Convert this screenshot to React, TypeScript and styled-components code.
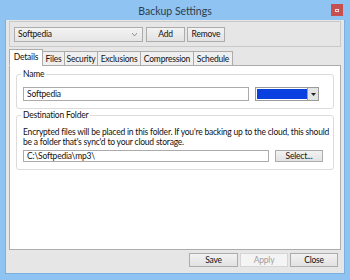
import React from 'react';
import styled, { createGlobalStyle } from 'styled-components';

const GlobalStyle = createGlobalStyle`
    html, body {
        margin: 0;
        padding: 0;
        background: #8fc3f1;
    }
    * {
        box-sizing: border-box;
    }
`;

const tabs = [
    { label: 'Details', width: 34 },
    { label: 'Files', width: 23 },
    { label: 'Security', width: 34 },
    { label: 'Exclusions', width: 44 },
    { label: 'Compression', width: 54 },
    { label: 'Schedule', width: 40 },
];

export default function App() {
    return (
        <>
            <GlobalStyle />
            <Window>
                <TitleBar>
                    <Title>Backup Settings</Title>
                    <CloseBox><CloseMark /></CloseBox>
                </TitleBar>
                <Client>
                    <ProfileBar>
                        <Combo>
                            <span>Softpedia</span>
                            <svg width="5" height="3" viewBox="0 0 5 3">
                                <path d="M0 0l2.5 3L5 0" fill="none" stroke="#888" strokeWidth="0.9" />
                            </svg>
                        </Combo>
                        <Button $width={39}>Add</Button>
                        <Button $width={38}>Remove</Button>
                    </ProfileBar>
                    <TabStrip>
                        {tabs.map((t, i) => (
                            <Tab key={t.label} $active={i === 0} $width={t.width}>{t.label}</Tab>
                        ))}
                    </TabStrip>
                    <TabPanel>
                        <Group>
                            <Legend>Name</Legend>
                            <Row>
                                <TextBox $width={226} $height={14}>Softpedia</TextBox>
                                <ColorPicker>
                                    <Swatch />
                                    <PickerButton>
                                        <svg width="5" height="3" viewBox="0 0 5 3">
                                            <path d="M0 0h5L2.5 3z" fill="#222" />
                                        </svg>
                                    </PickerButton>
                                </ColorPicker>
                            </Row>
                        </Group>
                        <Group>
                            <Legend>Destination Folder</Legend>
                            <Note>
                                Encrypted files will be placed in this folder. If you're backing up to the cloud, this should
                                <br />
                                be a folder that's sync'd to your cloud storage.
                            </Note>
                            <Row>
                                <TextBox $width={246} $height={12}>C:\Softpedia\mp3\</TextBox>
                                <Button $width={48} $height={12}>Select...</Button>
                            </Row>
                        </Group>
                    </TabPanel>
                    <Footer>
                        <Button $width={49} $height={14}>Save</Button>
                        <Button $width={48} $height={14} $disabled>Apply</Button>
                        <Button $width={48} $height={14}>Close</Button>
                    </Footer>
                </Client>
            </Window>
        </>
    );
}

const Window = styled.div`
    width: 350px;
    height: 280px;
    display: flex;
    flex-direction: column;
    background: #8fc3f1;
    padding: 0 5px 6px 5px;
    font-family: Lato, 'Noto Sans', sans-serif;
    font-size: 8.5px;
    letter-spacing: -0.2px;
    color: #111111;
`;

const TitleBar = styled.div`
    height: 20px;
    position: relative;
    display: flex;
    align-items: center;
    justify-content: center;
`;

const Title = styled.div`
    font-size: 10.5px;
    letter-spacing: 0;
    color: #2f3d4c;
    margin-top: 1px;
`;

const CloseBox = styled.div`
    position: absolute;
    right: 2px;
    top: 4px;
    width: 12px;
    height: 12px;
    background: #c74f50;
    display: flex;
    align-items: center;
    justify-content: center;
`;

const CloseMark = styled.div`
    width: 4px;
    height: 3px;
    border: 1px solid #f4dada;
`;

const Client = styled.div`
    flex: 1;
    display: flex;
    flex-direction: column;
    background: #e6e6e6;
    border: 1px solid #7ab0e0;
    border-top: none;
    padding: 1px 3px 0 3px;
`;

const ProfileBar = styled.div`
    height: 26px;
    display: flex;
    align-items: center;
    gap: 2px;
    padding: 0 4px;
    border: 1px solid #c9c9c9;
`;

const Combo = styled.div`
    width: 129px;
    height: 15px;
    display: flex;
    align-items: center;
    justify-content: space-between;
    padding: 0 5px 0 3px;
    background: linear-gradient(#f3f3f3, #e5e5e5);
    border: 1px solid #adadad;
    margin-right: 1px;
`;

const Button = styled.div<{ $width: number; $height?: number; $disabled?: boolean }>`
    width: ${p => p.$width}px;
    height: ${p => p.$height ?? 15}px;
    display: flex;
    align-items: center;
    justify-content: center;
    flex-shrink: 0;
    background: ${p => (p.$disabled ? '#f4f4f4' : 'linear-gradient(#f2f2f2, #e2e2e2)')};
    border: 1px solid ${p => (p.$disabled ? '#d5d5d5' : '#acacac')};
    color: ${p => (p.$disabled ? '#a0a0a0' : '#111111')};
`;

const TabStrip = styled.div`
    display: flex;
    align-items: flex-end;
    height: 18px;
    padding-left: 1px;
    position: relative;
    z-index: 1;
`;

const Tab = styled.div<{ $active?: boolean; $width: number }>`
    width: ${p => p.$width}px;
    height: ${p => (p.$active ? 17 : 15)}px;
    display: flex;
    align-items: center;
    justify-content: center;
    background: ${p => (p.$active ? '#ffffff' : '#efefef')};
    border: 1px solid #acacac;
    border-bottom: 1px solid ${p => (p.$active ? '#ffffff' : '#acacac')};
    margin-left: -1px;
    margin-bottom: -1px;
    padding-bottom: ${p => (p.$active ? 1 : 0)}px;
`;

const TabPanel = styled.div`
    flex: 1;
    background: #ffffff;
    border: 1px solid #acacac;
    padding: 8px 6px 0 6px;
    display: flex;
    flex-direction: column;
    gap: 6px;
`;

const Group = styled.div`
    position: relative;
    border: 1px solid #dcdcdc;
    border-radius: 3px;
    padding: 12px 6px 7px 6px;
`;

const Legend = styled.div`
    position: absolute;
    top: -7px;
    left: 4px;
    padding: 0 2px;
    background: #ffffff;
    line-height: 13px;
`;

const Row = styled.div`
    display: flex;
    align-items: center;
    gap: 6px;
`;

const TextBox = styled.div<{ $width: number; $height: number }>`
    width: ${p => p.$width}px;
    height: ${p => p.$height}px;
    padding: 0 3px;
    display: flex;
    align-items: center;
    border: 1px solid #ababab;
    background: #ffffff;
`;

const ColorPicker = styled.div`
    width: 64px;
    height: 14px;
    display: flex;
    border: 1px solid #9b9b9b;
    background: #ffffff;
    padding: 1px 0 1px 1px;
`;

const Swatch = styled.div`
    flex: 1;
    background: #0a3fe0;
`;

const PickerButton = styled.div`
    width: 11px;
    display: flex;
    align-items: center;
    justify-content: center;
    background: #e4e4e4;
    border-left: 1px solid #9b9b9b;
    margin: -1px 0;
`;

const Note = styled.div`
    line-height: 10px;
    margin-bottom: 3px;
    margin-top: -1px;
    white-space: nowrap;
`;

const Footer = styled.div`
    height: 23px;
    display: flex;
    justify-content: flex-end;
    align-items: flex-start;
    gap: 2px;
    padding-right: 3px;
    padding-top: 3px;
`;
